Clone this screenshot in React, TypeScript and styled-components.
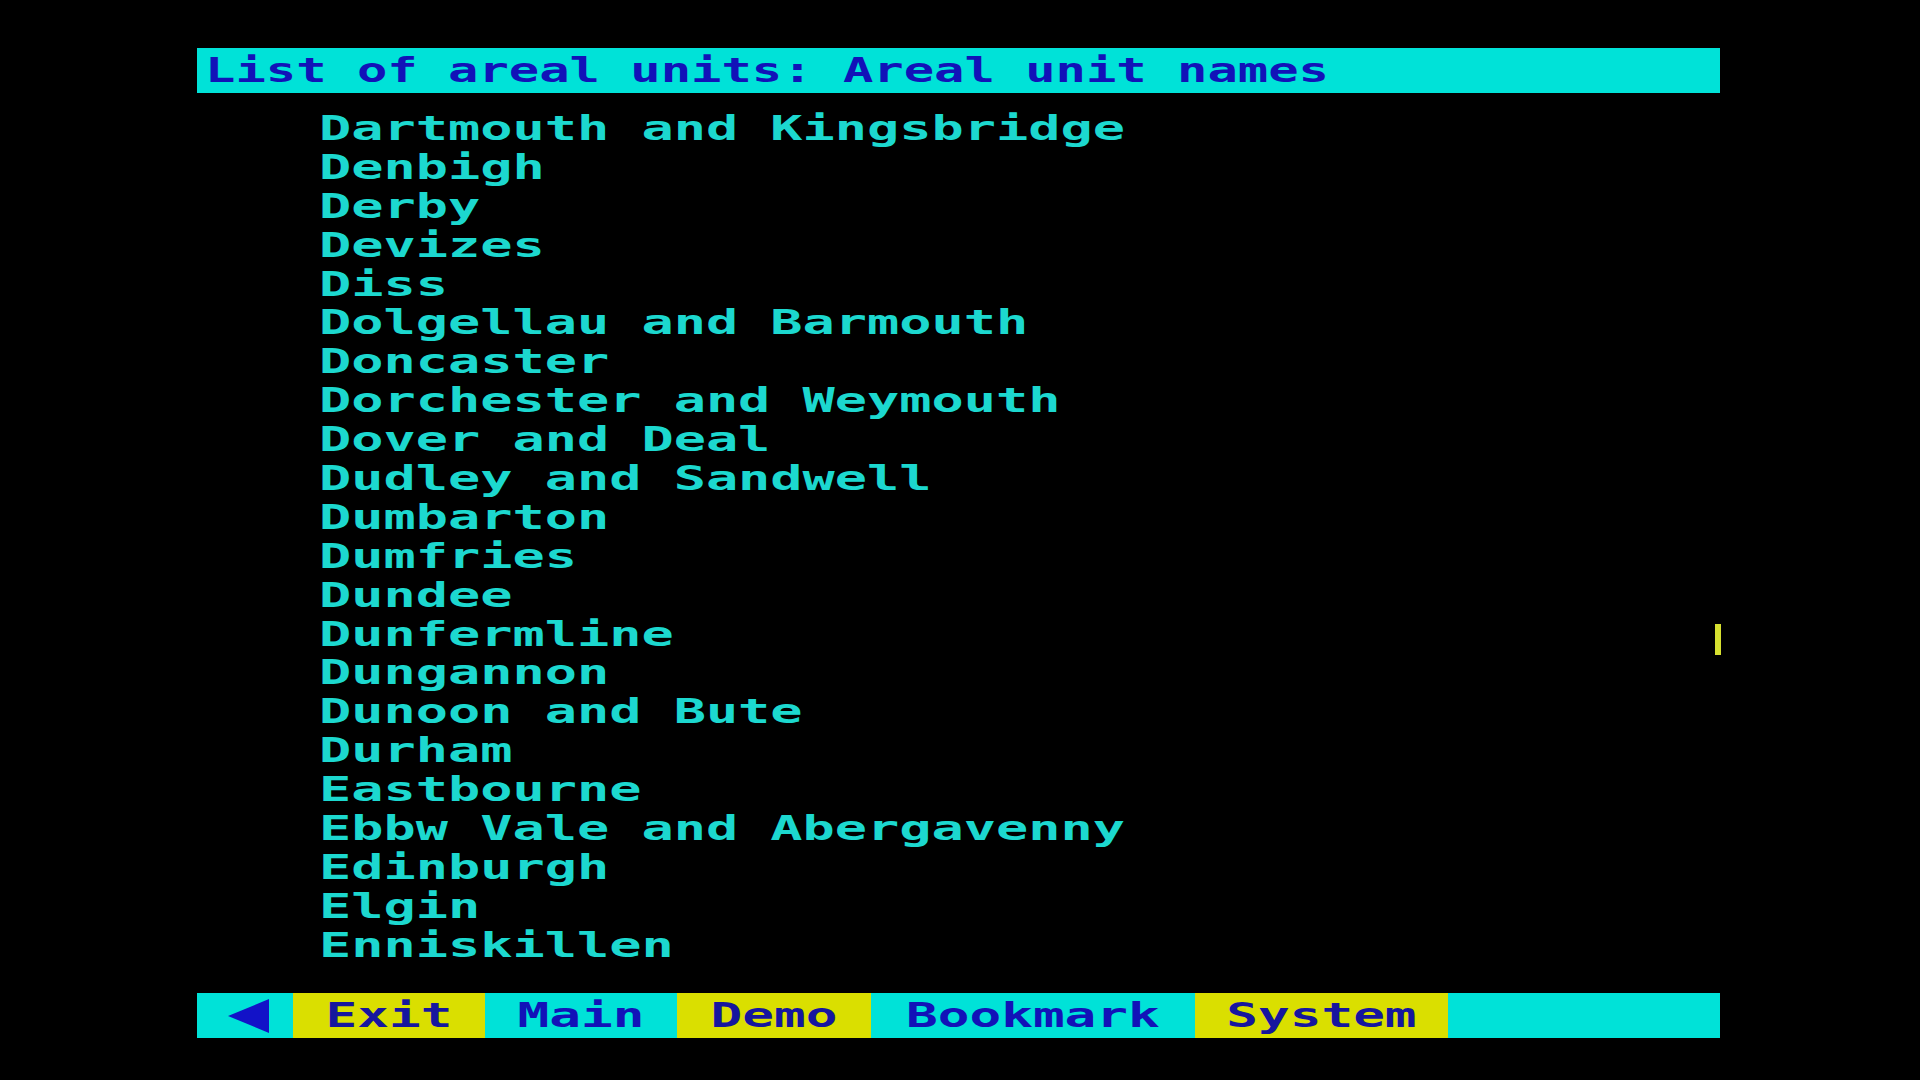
import React from "react";
import styled, { createGlobalStyle } from "styled-components";

const GlobalStyle = createGlobalStyle`
  html, body {
    margin: 0;
    padding: 0;
    background: #000;
  }
  body {
    width: 1920px;
    height: 1080px;
    overflow: hidden;
    font-family: "DejaVu Sans Mono", "Liberation Mono", monospace;
    font-weight: bold;
  }
`;

const Screen = styled.div`
  position: relative;
  width: 1920px;
  height: 1080px;
  background: #000;
  padding: 48px 200px 0 197px;
  box-sizing: border-box;
  display: flex;
  flex-direction: column;
`;

const TitleBar = styled.div`
  height: 45px;
  flex: none;
  background: #00e2d8;
  display: flex;
  align-items: center;
  padding-left: 8px;
  overflow: hidden;
`;

const Crt = styled.span<{ $scale: number; $origin?: string }>`
  display: inline-block;
  white-space: pre;
  font-size: 34px;
  line-height: 45px;
  transform: scaleX(${(p) => p.$scale});
  transform-origin: ${(p) => p.$origin ?? "left"} center;
`;

const TitleText = styled(Crt)`
  color: #1212b8;
`;

const List = styled.ul`
  list-style: none;
  margin: 0;
  padding: 16px 0 0 122px;
  height: 900px;
  flex: none;
  box-sizing: border-box;
`;

const Item = styled.li`
  height: 38.9px;
  line-height: 38.9px;
  color: #1cd8cf;
  font-size: 34px;
`;

const ItemText = styled(Crt)`
  line-height: 38.9px;
`;

const Footer = styled.div`
  height: 45px;
  flex: none;
  display: flex;
  background: #00e2d8;
`;

const Segment = styled.div<{ $w: number; $yellow?: boolean }>`
  width: ${(p) => p.$w}px;
  flex: none;
  height: 45px;
  background: ${(p) => (p.$yellow ? "#dadf00" : "#00e2d8")};
  color: ${(p) => (p.$yellow ? "#16169e" : "#1212b8")};
  display: flex;
  align-items: center;
  justify-content: center;
  overflow: hidden;
`;

const ArrowSeg = styled(Segment)`
  justify-content: flex-start;
  padding-left: 31px;
  box-sizing: border-box;
`;

const Cursor = styled.div`
  position: absolute;
  left: 1715px;
  top: 624px;
  width: 6px;
  height: 31px;
  background: #d6e030;
`;

const places = [
  "Dartmouth and Kingsbridge",
  "Denbigh",
  "Derby",
  "Devizes",
  "Diss",
  "Dolgellau and Barmouth",
  "Doncaster",
  "Dorchester and Weymouth",
  "Dover and Deal",
  "Dudley and Sandwell",
  "Dumbarton",
  "Dumfries",
  "Dundee",
  "Dunfermline",
  "Dungannon",
  "Dunoon and Bute",
  "Durham",
  "Eastbourne",
  "Ebbw Vale and Abergavenny",
  "Edinburgh",
  "Elgin",
  "Enniskillen",
];

const menu: { label: string; w: number; yellow: boolean }[] = [
  { label: "Exit", w: 192, yellow: true },
  { label: "Main", w: 192, yellow: false },
  { label: "Demo", w: 194, yellow: true },
  { label: "Bookmark", w: 324, yellow: false },
  { label: "System", w: 253, yellow: true },
];

export default function App() {
  return (
    <>
      <GlobalStyle />
      <Screen>
        <TitleBar>
          <TitleText $scale={1.484}>List of areal units: Areal unit names</TitleText>
        </TitleBar>
        <List>
          {places.map((p) => (
            <Item key={p}>
              <ItemText $scale={1.575}>{p}</ItemText>
            </Item>
          ))}
        </List>
        <Footer>
          <ArrowSeg $w={96}>
            <svg width="41" height="36" viewBox="0 0 41 36">
              <polygon points="0,18 41,1 41,35" fill="#1212c8" />
            </svg>
          </ArrowSeg>
          {menu.map((m) => (
            <Segment key={m.label} $w={m.w} $yellow={m.yellow}>
              <Crt $scale={1.55} $origin="center">
                {m.label}
              </Crt>
            </Segment>
          ))}
        </Footer>
        <Cursor />
      </Screen>
    </>
  );
}
